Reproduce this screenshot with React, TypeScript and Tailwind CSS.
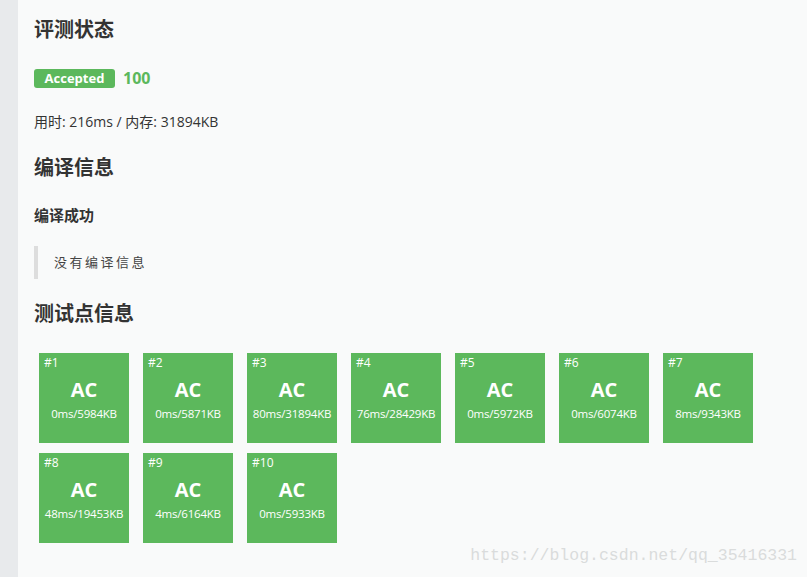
const cases = [
  { id: 1, info: "0ms/5984KB" },
  { id: 2, info: "0ms/5871KB" },
  { id: 3, info: "80ms/31894KB" },
  { id: 4, info: "76ms/28429KB" },
  { id: 5, info: "0ms/5972KB" },
  { id: 6, info: "0ms/6074KB" },
  { id: 7, info: "8ms/9343KB" },
  { id: 8, info: "48ms/19453KB" },
  { id: 9, info: "4ms/6164KB" },
  { id: 10, info: "0ms/5933KB" },
];

const font = { fontFamily: '"Open Sans", "Noto Sans CJK SC", sans-serif' };

export default function App() {
  return (
    <div className="flex w-[807px] h-[577px] overflow-hidden bg-[#f9fafa] text-[#333]" style={font}>
      <div className="w-[18px] shrink-0 bg-[#e8eaec]" />
      <div className="relative flex-1 pl-[16px] pt-[18px]">
        <h2 className="text-[20px] font-bold leading-[24px] text-[#333]">评测状态</h2>

        <div className="mt-[27px] flex items-center gap-[8px]">
          <span className="h-[19px] w-[81px] rounded-[3px] bg-[#5cb85c] text-center text-[13px] font-bold leading-[19px] text-white">
            Accepted
          </span>
          <span className="text-[16px] font-bold leading-[19px] text-[#5cb85c]">100</span>
        </div>

        <p className="mt-[24px] text-[14px] leading-[20px]">用时: 216ms / 内存: 31894KB</p>

        <h2 className="mt-[24px] text-[20px] font-bold leading-[24px]">编译信息</h2>

        <p className="mt-[25px] text-[15px] font-bold leading-[20px]">编译成功</p>

        <div className="mt-[21px] h-[33px] border-l-[4px] border-[#ddd] pl-[16px] text-[13px] leading-[33px] tracking-[2.5px] text-[#444]">
          没有编译信息
        </div>

        <h2 className="mt-[23px] text-[20px] font-bold leading-[24px]">测试点信息</h2>

        <div className="mt-[27px] ml-[5px] grid w-[720px] grid-cols-[repeat(7,90px)] gap-x-[14px] gap-y-[10px]">
          {cases.map((c) => (
            <div key={c.id} className="relative flex h-[90px] w-[90px] flex-col items-center bg-[#5cb85c] text-white">
              <span className="absolute left-[5px] top-[2px] text-[12px] leading-[16px]">#{c.id}</span>
              <span className="mt-[25px] text-[20px] font-bold leading-[24px]">AC</span>
              <span className="mt-[4px] text-[11.5px] tracking-[-0.2px] leading-[16px]">{c.info}</span>
            </div>
          ))}
        </div>

        <div className="absolute bottom-[11px] right-[10px] text-[16.5px] leading-[20px] text-[#dadcdc]" style={{ fontFamily: '"Liberation Mono", monospace' }}>
          https://blog.csdn.net/qq_35416331
        </div>
      </div>
    </div>
  );
}
